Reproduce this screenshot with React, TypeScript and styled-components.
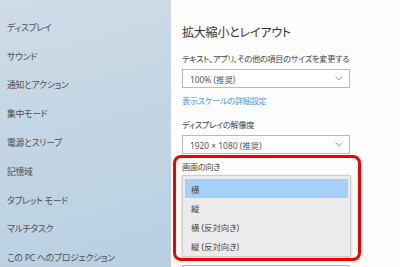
import React from "react";
import styled, { createGlobalStyle } from "styled-components";

const Global = createGlobalStyle`
  html, body { margin: 0; padding: 0; }
  body {
    font-family: "Noto Sans", "Noto Sans CJK JP", sans-serif;
    font-feature-settings: "palt";
  }
`;

const Page = styled.div`
  display: flex;
  width: 400px;
  height: 267px;
  overflow: hidden;
`;

const Nav = styled.nav`
  width: 171px;
  flex: none;
  padding-top: 13px;
  box-sizing: border-box;
  background: linear-gradient(165deg, #d0dce6 0%, #c3d6e4 45%, #b9d0e1 100%);
  display: flex;
  flex-direction: column;
`;

const NavItem = styled.div`
  height: 28.8px;
  flex: none;
  display: flex;
  align-items: center;
  padding-left: 7px;
  font-size: 8.8px;
  letter-spacing: -0.25px;
  color: #4a4f55;
  white-space: pre;
`;

const Main = styled.main`
  flex: 1;
  position: relative;
  background: #fdfdfd;
  padding-left: 11px;
  padding-top: 25px;
  display: flex;
  flex-direction: column;
  align-items: flex-start;
  & > * {
    flex-shrink: 0;
  }
`;

const Heading = styled.h1`
  margin: 0;
  font-size: 12px;
  letter-spacing: -0.2px;
  line-height: 16px;
  font-weight: 400;
  color: #333;
`;

const Label = styled.div<{ $top: number }>`
  margin-top: ${(p) => p.$top}px;
  font-size: 8.2px;
  letter-spacing: -0.3px;
  line-height: 12px;
  color: #444;
  white-space: nowrap;
`;

const Link = styled.div<{ $top: number }>`
  margin-top: ${(p) => p.$top}px;
  font-size: 8.2px;
  letter-spacing: -0.3px;
  line-height: 12px;
  color: #4d9be0;
`;

const Select = styled.div<{ $top: number }>`
  margin-top: ${(p) => p.$top}px;
  width: 168px;
  height: 19px;
  box-sizing: border-box;
  border: 1px solid #b9b9b9;
  background: #fff;
  display: flex;
  align-items: center;
  justify-content: space-between;
  padding: 0 6px 0 7px;
  font-size: 8.4px;
  color: #555;
  white-space: nowrap;
`;

const Chevron = () => (
  <svg width="8" height="5" viewBox="0 0 8 5">
    <path d="M0.5 0.5 L4 4 L7.5 0.5" fill="none" stroke="#999" strokeWidth="0.9" />
  </svg>
);

const DropList = styled.ul`
  margin: 2px 0 0;
  width: 169px;
  padding: 3px 2px 1px;
  box-sizing: border-box;
  list-style: none;
  background: #ebebeb;
  border: 1px solid #cfcfcf;
  box-shadow: 0 1px 3px rgba(0, 0, 0, 0.22);
  position: relative;
  z-index: 1;
`;

const DropItem = styled.li<{ $selected?: boolean }>`
  height: 19px;
  display: flex;
  align-items: center;
  padding-left: 6px;
  font-size: 8.4px;
  color: #444;
  background: ${(p) => (p.$selected ? "#a5d0fa" : "transparent")};
`;

const Highlight = styled.div`
  position: absolute;
  left: 2px;
  top: 155px;
  width: 188px;
  height: 106px;
  box-sizing: border-box;
  border: 3px solid #f20000;
  border-radius: 8px;
  pointer-events: none;
  z-index: 2;
`;

const navItems = [
  "ディスプレイ",
  "サウンド",
  "通知とアクション",
  "集中モード",
  "電源とスリープ",
  "記憶域",
  "タブレット モード",
  "マルチタスク",
  "この PC へのプロジェクション",
];

const orientations = ["横", "縦", "横 (反対向き)", "縦 (反対向き)"];

export default function App() {
  return (
    <>
      <Global />
      <Page>
        <Nav>
          {navItems.map((n) => (
            <NavItem key={n}>{n}</NavItem>
          ))}
        </Nav>
        <Main>
          <Heading>拡大縮小とレイアウト</Heading>
          <Label $top={12}>テキスト、アプリ、その他の項目のサイズを変更する</Label>
          <Select $top={4}>
            <span>100% (推奨)</span>
            <Chevron />
          </Select>
          <Link $top={7}>表示スケールの詳細設定</Link>
          <Label $top={12}>ディスプレイの解像度</Label>
          <Select $top={4}>
            <span>1920 × 1080 (推奨)</span>
            <Chevron />
          </Select>
          <Label $top={7}>画面の向き</Label>
          <DropList>
            {orientations.map((o, i) => (
              <DropItem key={o} $selected={i === 0}>
                {o}
              </DropItem>
            ))}
          </DropList>
          <Select $top={8}>
            <span>表示画面を複製する</span>
            <Chevron />
          </Select>
          <Highlight />
        </Main>
      </Page>
    </>
  );
}
